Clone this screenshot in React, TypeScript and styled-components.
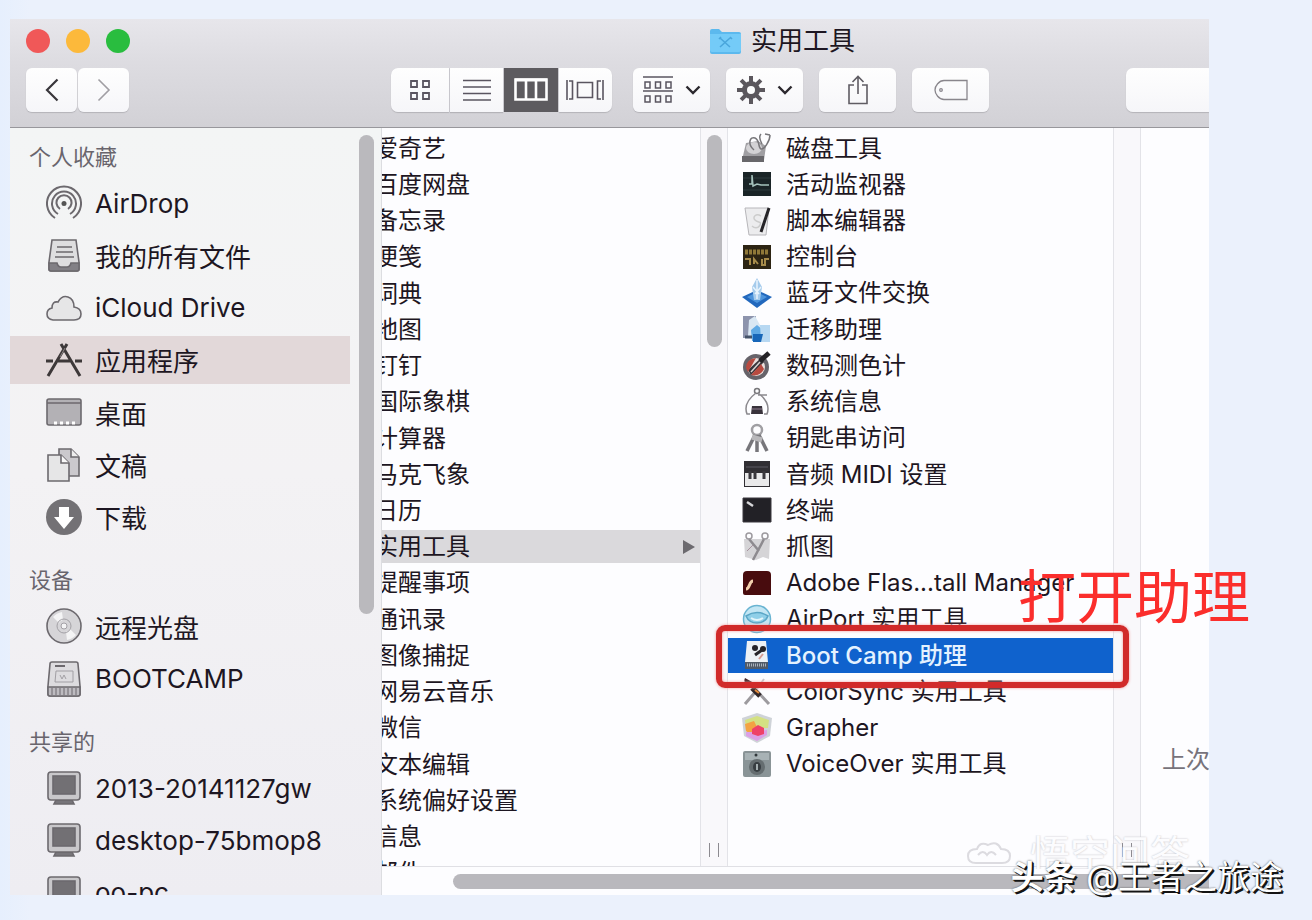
import React from "react";
import styled, { createGlobalStyle, css } from "styled-components";

const GlobalStyle = createGlobalStyle`
  *, *::before, *::after { box-sizing: border-box; }
  body {
    margin: 0;
    background: #eaf1fc;
    color: #1d1622;
    font-family: Inter, "Noto Sans CJK SC", sans-serif;
  }
  ul { list-style: none; margin: 0; padding: 0; }
  button, input {
    font: inherit;
    color: inherit;
    border: 0;
    margin: 0;
    padding: 0;
    background: none;
  }
  svg { display: block; flex: none; }
`;

/* ---------- page and window ---------- */

const Page = styled.main`
  position: relative;
  display: flex;
  height: 100vh;
  min-height: 600px;
  padding: 19px 103px 25px 10px;
  background: linear-gradient(90deg, #e6effd, #ebf1fc 30px);
`;

const Window = styled.section`
  flex: 1;
  min-width: 0;
  display: flex;
  flex-direction: column;
`;

const Toolbar = styled.header`
  padding: 0 0 15px 16px;
  background: linear-gradient(#e7e6eb, #dddce1 40%, #d2d1d6);
  border-bottom: 1px solid #98979c;
  overflow: hidden;
`;

const TitleRow = styled.div`
  display: flex;
  align-items: center;
  height: 44px;
`;

const Lights = styled.div`
  display: flex;
  flex: none;
  gap: 16px;
  width: 684px;
`;

const Light = styled.button<{ $color: string }>`
  width: 24px;
  height: 24px;
  border-radius: 50%;
  background: ${(p) => p.$color};
`;

const Title = styled.h1`
  display: flex;
  align-items: center;
  gap: 10px;
  margin: 0;
  font-size: 26px;
  line-height: 36px;
  font-weight: 400;
  white-space: nowrap;
`;

const Tools = styled.div`
  display: flex;
  margin-top: 5px;
`;

const NavTools = styled.div`
  display: flex;
  flex: none;
  gap: 1px;
  width: 365px;
`;

const toolFace = css`
  display: flex;
  align-items: center;
  justify-content: center;
  height: 44px;
  background: linear-gradient(#fefefe, #f6f6f9);
  box-shadow: 0 1px 1px #b4b3b8;
`;

const NavButton = styled.button`
  ${toolFace}
  width: 51px;
  border-radius: 6px;
`;

const ViewGroup = styled.div`
  display: flex;
  flex: none;
  gap: 1px;
  width: 221px;
  margin-right: 21px;
  border-radius: 7px;
  background: #cfced3;
`;

const ViewButton = styled.button<{ $active?: boolean }>`
  ${toolFace}
  flex: 1;
  &:first-child { flex: none; width: 58px; border-radius: 7px 0 0 7px; }
  &:last-child { border-radius: 0 7px 7px 0; }
  ${(p) => p.$active && css`background: #5d5b5f; box-shadow: none;`}
`;

const ActionGroup = styled.div`
  display: flex;
  flex: none;
  gap: 16px;
`;

const ActionButton = styled.button`
  ${toolFace}
  width: 77px;
  gap: 12px;
  border-radius: 6px;
`;

const Search = styled.input`
  ${toolFace}
  flex: 1;
  min-width: 0;
  margin-left: 137px;
  padding-left: 14px;
  border-radius: 7px 0 0 7px;
`;

const Body = styled.div`
  flex: 1;
  min-height: 0;
  display: flex;
`;

/* ---------- sidebar ---------- */

const Sidebar = styled.aside`
  display: flex;
  flex: none;
  width: 372px;
  background: linear-gradient(#f3f5f5, #f3f2f4 45%, #eeedf2);
  border-right: 1px solid #dcdde1;
  overflow: hidden;
`;

const SidebarNav = styled.nav`
  display: flex;
  flex-direction: column;
  gap: 17px;
  width: 340px;
  padding-top: 9px;
`;

const GroupTitle = styled.h2`
  margin: 0;
  padding-left: 19px;
  font-size: 22px;
  line-height: 40px;
  font-weight: 400;
  color: #69656d;
`;

const SideList = styled.ul<{ $height: number }>`
  display: grid;
  grid-auto-rows: 1fr;
  align-items: center;
  height: ${(p) => p.$height}px;
`;

const SideItem = styled.button<{ $active?: boolean }>`
  display: flex;
  align-items: center;
  gap: 13px;
  width: 100%;
  height: 48px;
  padding-left: 36px;
  font-size: 26px;
  text-align: left;
  white-space: nowrap;
  background: ${(p) => (p.$active ? "#e2d8d9" : "transparent")};
`;

const SideRail = styled.div`
  flex: 1;
  padding: 7px 7px 0 9px;
`;

const Thumb = styled.div<{ $height: number }>`
  width: 15px;
  height: ${(p) => p.$height}px;
  border-radius: 8px;
  background: #bab9bd;
`;

/* ---------- file columns ---------- */

const Browser = styled.div`
  flex: 1;
  min-width: 0;
  display: flex;
  flex-direction: column;
  background: #fdfdff;
`;

const Columns = styled.div`
  flex: 1;
  min-height: 0;
  display: flex;
`;

const AppColumn = styled.div`
  flex: none;
  width: 318px;
  overflow: hidden;
`;

const ToolColumn = styled.div`
  flex: none;
  width: 385px;
`;

const Preview = styled.div`
  flex: 1;
  min-width: 0;
  padding: 614px 0 0 21px;
  overflow: hidden;
  font-size: 24px;
  line-height: 36px;
  color: #77737b;
  white-space: nowrap;
`;

const FileList = styled.ul<{ $height: number }>`
  display: grid;
  grid-auto-rows: 1fr;
  align-items: center;
  height: ${(p) => p.$height}px;
  margin-top: 2px;
`;

const FileCell = styled.li`
  position: relative;
`;

const AppItem = styled.button<{ $active?: boolean }>`
  display: flex;
  align-items: center;
  justify-content: space-between;
  width: 100%;
  height: 33px;
  padding-right: 5px;
  font-size: 24px;
  line-height: 33px;
  text-align: left;
  background: ${(p) => (p.$active ? "#dad9dc" : "transparent")};
`;

/* The list is scrolled sideways, so each name begins left of the column. */
const AppName = styled.span`
  margin-left: -8px;
`;

const ToolItem = styled.button<{ $active?: boolean }>`
  display: flex;
  align-items: center;
  gap: 14px;
  width: 100%;
  height: 35px;
  padding-left: 14px;
  font-size: 24px;
  line-height: 35px;
  text-align: left;
  white-space: nowrap;
  ${(p) => p.$active && css`background: #0f62cd; color: #e4f2ff; font-weight: 500;`}
`;

const Gutter = styled.div`
  display: flex;
  flex: none;
  flex-direction: column;
  align-items: center;
  width: 28px;
  padding: 7px 0 9px;
  background: #f9f8fb;
  border: solid #e3e3e8;
  border-width: 0 1px;
`;

const Grip = styled.div`
  display: flex;
  width: 10px;
  height: 14px;
  margin-top: auto;
  border: solid #8c8a90;
  border-width: 0 1px;
`;

const BottomRail = styled.div`
  flex: none;
  height: 29px;
  padding: 7px 0 7px 71px;
  border-top: 1px solid #e0e0e5;
`;

const BottomThumb = styled.div`
  height: 15px;
  border-radius: 8px 0 0 8px;
  background: #b9b8bd;
`;

/* ---------- marks laid over the window ---------- */

const Frame = styled.div`
  position: absolute;
  z-index: 2;
  inset: -13px -16px -15px -12px;
  border: 6px solid #d12a2a;
  border-radius: 9px;
  box-shadow: 0 0 3px #f29a9a, inset 0 0 3px #f29a9a;
  pointer-events: none;
`;

const Callout = styled.strong`
  position: absolute;
  z-index: 3;
  left: 290px;
  bottom: 46px;
  font-size: 58px;
  line-height: 60px;
  font-weight: 400;
  color: #fb2e2c;
  white-space: nowrap;
  pointer-events: none;
`;

const Credit = styled.p`
  position: absolute;
  z-index: 3;
  right: 29px;
  bottom: 23px;
  margin: 0;
  font-size: 33px;
  line-height: 40px;
  color: #fff;
  text-shadow: 2px 2px 0 #141414, 1px 1px 0 #141414, 0 0 2px #555;
  white-space: nowrap;
  b { font-weight: 700; }
`;

const GhostMark = styled.p`
  position: absolute;
  z-index: 1;
  right: 122px;
  bottom: 51px;
  display: flex;
  align-items: flex-start;
  gap: 18px;
  height: 34px;
  margin: 0;
  overflow: hidden;
  font-size: 40px;
  line-height: 40px;
  color: #fcfcfe;
  text-shadow: 0 0 2px #bdbcc2;
`;

/* ---------- toolbar drawings ---------- */

const Chevron = () => (
  <svg width="16" height="10" viewBox="0 0 16 10" fill="none" stroke="#2b282e" strokeWidth="2.4">
    <path d="M1.5 1.5 8 8l6.500-6.500" />
  </svg>
);

const FolderIcon = () => (
  <svg width="31" height="26" viewBox="0 0 31 26">
    <path d="M0 3q0-2 2-2h7l3 3h17q2 0 2 2v18q0 2-2 2H2q-2 0-2-2z" fill="#5cb9ee" />
    <path d="M0 6h31v16q0 2-2 2H2q-2 0-2-2z" fill="#74cbf8" />
    <path d="m10 10 10 9M20 10l-10 9M9 11l2-2M20 9l2 2" stroke="#4aa6dc" strokeWidth="1.600" fill="none" />
  </svg>
);

const GridIcon = () => (
  <svg width="22" height="22" viewBox="0 0 22 22" fill="none" stroke="#5a5560" strokeWidth="1.800">
    <path d="M2 2h6v6H2zM14 2h6v6h-6zM2 14h6v6H2zM14 14h6v6h-6z" />
  </svg>
);

const LinesIcon = () => (
  <svg width="28" height="22" viewBox="0 0 28 22" stroke="#5a5560" strokeWidth="1.600">
    <path d="M0 1.500h28M0 8h28M0 14.500h28M0 21h28" />
  </svg>
);

const ColumnsIcon = () => (
  <svg width="34" height="24" viewBox="0 0 34 24">
    <path d="M1.500 1.500h31v20h-31z" fill="#5d5b5f" stroke="#fff" strokeWidth="2.600" />
    <path d="M1 2h32" stroke="#fff" strokeWidth="3" />
    <path d="M12 2v20M22 2v20" stroke="#fff" strokeWidth="2.600" />
  </svg>
);

const CoverIcon = () => (
  <svg width="38" height="22" viewBox="0 0 38 22" fill="none" stroke="#5a5560" strokeWidth="1.600">
    <path d="M11.500 3.500h15v15h-15z" />
    <path d="M1 1v20M3 2h3.500v18H3M37 1v20M35 2h-3.500v18H35" />
  </svg>
);

const ArrangeIcon = () => (
  <svg width="30" height="28" viewBox="0 0 30 28" fill="none" stroke="#5a5560" strokeWidth="1.500">
    <path d="M0 1h30M0 15h30" />
    <path d="M2 6h5v6H2zM12.500 6h5v6h-5zM23 6h5v6h-5zM2 20h5v6H2zM12.500 20h5v6h-5zM23 20h5v6h-5z" />
  </svg>
);

const GearIcon = () => (
  <svg width="28" height="28" viewBox="-14 -14 28 28">
    {[0, 45, 90, 135].map((a) => (
      <path key={a} d="M0-14V14" stroke="#5b575d" strokeWidth="4" transform={`rotate(${a})`} />
    ))}
    <circle r="9" fill="#5b575d" />
    <circle r="4" fill="#fbfbfc" />
  </svg>
);

const ShareIcon = () => (
  <svg width="24" height="30" viewBox="0 0 24 30" fill="none" stroke="#5f5c63" strokeWidth="1.600">
    <path d="M8 10H3v18.500h18V10h-5M12 19V1.500M6.500 7 12 1.500 17.500 7" />
  </svg>
);

const TagIcon = () => (
  <svg width="34" height="22" viewBox="0 0 34 22" fill="none" stroke="#89868c" strokeWidth="1.300">
    <path d="M10 1.500h23v19H10C5 20.500 1 15 1 11s4-9.500 9-9.500z" />
    <circle cx="7" cy="11" r="1.300" />
  </svg>
);

/* ---------- sidebar drawings ---------- */

const side = { width: 36, height: 36, viewBox: "0 0 36 36", fill: "none", stroke: "#6c696e", strokeWidth: 1.6 };

const AirDropIcon = () => (
  <svg {...side} strokeWidth="2">
    <path d="M9 33a17 17 0 1 1 18 0M12 29a12 12 0 1 1 12 0M14 24a7.500 7.500 0 1 1 8 0" />
    <circle cx="18" cy="18.500" r="2.500" fill="#555" stroke="none" />
  </svg>
);

const AllFilesIcon = () => (
  <svg {...side}>
    <path d="M6 3h24l3 22v7q0 2-2 2H5q-2 0-2-2v-7z" fill="#dededf" />
    <path d="M3 26h8q1 4 4 4h6q3 0 4-4h8v6q0 2-2 2H5q-2 0-2-2z" fill="#828085" />
    <path d="M11 10h15M10 15h17M9 20h19" />
  </svg>
);

const CloudIcon = () => (
  <svg {...side}>
    <path d="M7 30q-6-1-6-6t5-6q0-7 6-6 4-7 10-5 6 2 6 10 7 1 7 7 0 6-7 6z" fill="#e6e6e7" />
  </svg>
);

const AppsIcon = () => (
  <svg {...side} stroke="#3d3839" strokeWidth="3">
    <path d="M15 2 34 34M21 2 2 34M0 19h7M12 19h12M29 19h7" />
    <path d="m19 6-5 9" stroke="#8a8384" strokeWidth="1" />
  </svg>
);

const DesktopIcon = () => (
  <svg {...side}>
    <rect x="1" y="5" width="34" height="26" rx="2" fill="#b3b1b5" />
    <path d="M1 9h34" />
    <path d="M8 29h3M14 29h3M20 29h3M26 29h3" stroke="#fff" strokeWidth="3" />
  </svg>
);

const DocsIcon = () => (
  <svg {...side}>
    <path d="M13 2h12l8 8v19H13z" fill="#cbc9cd" />
    <path d="M25 2v8h8" fill="#eee" />
    <path d="M2 8h13l8 8v18H2z" fill="#e6e6e7" />
    <path d="M15 8v8h8" fill="#f8f8f8" />
  </svg>
);

const DownloadIcon = () => (
  <svg {...side} stroke="none">
    <circle cx="18" cy="18" r="18" fill="#737175" />
    <path d="M13 8h10v10h5L18 30 8 18h5z" fill="#fff" />
  </svg>
);

const DiscIcon = () => (
  <svg {...side}>
    <circle cx="18" cy="18" r="17" fill="#d6d5d8" />
    <path d="M7 9a15 15 0 0 1 9-5l1 8a7 7 0 0 0-4 3zM30 27a15 15 0 0 1-9 5l-1-8a7 7 0 0 0 4-3z" fill="#f4f4f5" stroke="none" />
    <circle cx="18" cy="18" r="7" stroke="#a3a1a6" strokeWidth="1" />
    <circle cx="18" cy="18" r="3" fill="#f4f4f5" stroke="#a3a1a6" strokeWidth="1" />
  </svg>
);

const DriveIcon = () => (
  <svg {...side}>
    <path d="M6 1h24q2 0 2 2l2 22v8q0 2-2 2H4q-2 0-2-2v-8L4 3q0-2 2-2z" fill="#dddcdf" />
    <path d="M2 26h32v7q0 2-2 2H4q-2 0-2-2z" fill="#bdbbc0" />
    <path d="M6 27v7M10 27v7M14 27v7M18 27v7M22 27v7M26 27v7M30 27v7" strokeWidth="1" />
    <path d="M9 5h10" strokeWidth="2" />
    <path d="M10 10h17v11H9zM14 14l2 4 2-4 2 4" stroke="#a19fa4" strokeWidth="1" />
  </svg>
);

const PcIcon = () => (
  <svg {...side}>
    <path d="M10 30h16l2 4H8z" fill="#77757a" />
    <rect x="2" y="2" width="32" height="28" rx="3" fill="#c8c7ca" />
    <rect x="7" y="6" width="22" height="18" fill="#727074" />
  </svg>
);

/* ---------- utility drawings ---------- */

const app = { width: 30, height: 30, viewBox: "0 0 30 30", fill: "none" };

const DiskUtilityIcon = () => (
  <svg {...app}>
    <path d="m4 10 12-2 8 5-2 14H0z" fill="#a09fa3" />
    <path d="M0 23h22v6H0z" fill="#68676b" />
    <ellipse cx="12" cy="15" rx="8" ry="6" fill="#d3d2d5" />
    <path d="M12 17C5 11 8 3 13 5s3 10 6 11 9-8 9-14M28 2l-5-1M19 1q-3 3 1 10" stroke="#77767a" strokeWidth="1.500" />
  </svg>
);

const ActivityIcon = () => (
  <svg {...app}>
    <path d="M1 3h28v24H1z" fill="#1a2427" />
    <path d="M1 21h28M1 9h28" stroke="#2c3b3e" />
    <path d="M7 15h3V6l1 11 4-2 4 1h8" stroke="#a5c2bd" strokeWidth="1.500" />
  </svg>
);

const ScriptIcon = () => (
  <svg {...app}>
    <path d="M3 2h24l-3 27H7z" fill="#ececee" stroke="#b7b6ba" />
    <path d="M19 10c-5-3-9 1-6 4s7 1 5 5-6 3-8 1" stroke="#ccc" strokeWidth="1.500" />
    <path d="m27 2-8 24" stroke="#252327" strokeWidth="3" />
  </svg>
);

const ConsoleIcon = () => (
  <svg {...app}>
    <path d="M1 3h28v24H1z" fill="#2c2413" />
    <path d="M3 10h24" stroke="#8f7838" strokeWidth="5" strokeDasharray="3 1" />
    <path d="M3 17h5v6M12 22v-5l4 5M20 17v6h3v-6h4" stroke="#a68b4a" strokeWidth="2" />
  </svg>
);

const BluetoothIcon = () => (
  <svg {...app}>
    <path d="m0 19 15-7 15 7-15 11z" fill="#2268bd" />
    <path d="m5 19 10-5 10 5-10 6z" fill="#4d94dc" />
    <path d="M15 0 10 9l2 13h6l2-13z" fill="#a5cbec" />
    <path d="M15 2v19M11 9l6 7M19 9l-6 7" stroke="#e9f4fd" strokeWidth="1.500" />
  </svg>
);

const MigrationIcon = () => (
  <svg {...app}>
    <path d="M1 2h13v22H1z" fill="#8d94ad" />
    <path d="m7 6 6-4 5 9 4 3-6 8H6z" fill="#d9e7f3" />
    <path d="m9 16 6-5 6 5 3 11H10z" fill="#5fa9e4" />
    <path d="M18 11h10v17h-9z" fill="#b7d8f2" />
    <path d="M11 20h10l-2 8h-8z" fill="#1766b8" />
    <path d="M3 23h7" stroke="#455369" strokeWidth="3" />
  </svg>
);

const ColorMeterIcon = () => (
  <svg {...app}>
    <circle cx="14" cy="17" r="13" fill="#66636a" />
    <circle cx="14" cy="17" r="9" fill="#e9dedb" />
    <path d="M6 20 19 8l3 4L9 25z" fill="#38353a" />
    <path d="M4 18q0-9 10-10l-8 14zM9 25l10-11 3 5q-4 8-13 6z" fill="#b84a40" />
    <path d="m9 22 9-10" stroke="#d8d2d0" strokeWidth="1.500" />
    <path d="m18 11 9-8" stroke="#242226" strokeWidth="5" />
  </svg>
);

const SystemInfoIcon = () => (
  <svg {...app}>
    <circle cx="15" cy="4" r="2.500" stroke="#77767a" strokeWidth="1.500" />
    <path d="M14 6C6 12 2 19 5 27l3 0M16 6c8 6 12 13 9 21h-3M16 8h9" stroke="#8b898e" strokeWidth="1.500" />
    <path d="M10 19h10l1 8H9z" fill="#39333c" />
    <path d="M10 22h10" stroke="#8e7d8e" />
  </svg>
);

const KeychainIcon = () => (
  <svg {...app}>
    <circle cx="15" cy="7" r="5" stroke="#a09fa3" strokeWidth="2.500" />
    <path d="m13 12-8 16M15 12v17M17 12l8 16" stroke="#77767b" strokeWidth="3.500" />
    <path d="m10 14 10 3" stroke="#b9b8bb" strokeWidth="5" />
  </svg>
);

const MidiIcon = () => (
  <svg {...app}>
    <path d="M2 2h26v26H2z" fill="#302e33" />
    <path d="M3 14h24v13H3z" fill="#e9e9ea" />
    <path d="M8 12v8M13 12v8M22 12v8" stroke="#39373c" strokeWidth="3" />
    <path d="M4 8h22" stroke="#45434a" strokeWidth="2" />
  </svg>
);

const TerminalIcon = () => (
  <svg {...app}>
    <path d="M1 3h28v24H1z" fill="#222126" stroke="#3b393f" />
    <path d="m5 7 6 4" stroke="#d7d7d9" strokeWidth="2.500" />
  </svg>
);

const GrabIcon = () => (
  <svg {...app}>
    <path d="M2 7h26l-1 20-6-2-7 3-11-3z" fill="#d5d4d7" />
    <path d="m7 7 10 12M22 7 11 28" stroke="#8d8a8f" strokeWidth="2.500" />
    <circle cx="7" cy="4" r="3" stroke="#9d9a9f" strokeWidth="1.500" />
    <circle cx="23" cy="4" r="3" stroke="#9d9a9f" strokeWidth="1.500" />
    <path d="m5 19 6-6" stroke="#a6929e" />
  </svg>
);

const FlashIcon = () => (
  <svg {...app}>
    <path d="M5 3h20q4 0 4 4v20H3q-2 0-2-2V7q0-4 4-4z" fill="#480c0e" />
    <path d="M4 21c4 0 3-8 7-8" stroke="#f2cfac" strokeWidth="3" />
  </svg>
);

const AirPortIcon = () => (
  <svg {...app}>
    <circle cx="15" cy="15" r="13.500" fill="#c3e6f4" stroke="#69b4d2" strokeWidth="1.500" />
    <path d="M4 12q11-7 22 0-3 7-11 7T4 12z" fill="#8fcfe8" stroke="#5aa6c6" strokeWidth="1.500" />
    <path d="M9 14q6 4 12 0" stroke="#e3f5fb" strokeWidth="2" />
    <path d="M9 24q6-4 12 0" stroke="#5aa6c6" strokeWidth="1.500" />
  </svg>
);

const BootCampIcon = () => (
  <svg {...app}>
    <path d="M5 1h19l2 21H3z" fill="#edf1f5" />
    <path d="M3 22h23v7H3z" fill="#515b68" />
    <path d="M5 25h19" stroke="#a9b2bd" strokeWidth="3" strokeDasharray="1 1" />
    <circle cx="13" cy="8" r="3" fill="#252328" />
    <circle cx="21" cy="9" r="3" fill="#252328" />
    <path d="m13 15 7-5" stroke="#252328" strokeWidth="3" />
    <path d="m17 19 4-5" stroke="#d49b92" strokeWidth="2" />
  </svg>
);

const ColorSyncIcon = () => (
  <svg {...app}>
    <path d="M3 2q-3 5 5 9l8 5-4-9z" fill="#402327" />
    <path d="m14 14 13 14M15 14 3 28" stroke="#9d9b9f" strokeWidth="3" />
    <path d="m22 3-7 10" stroke="#c8c7cb" strokeWidth="2" />
    <path d="m10 12 8 8" stroke="#302728" strokeWidth="5" />
    <path d="m13 14 4 3" stroke="#e38b3c" strokeWidth="2" />
  </svg>
);

const GrapherIcon = () => (
  <svg {...app}>
    <path d="M0 5 15 0l15 5-2 18-13 7L2 23z" fill="#cfd3d8" />
    <path d="m3 7 12-4 12 4-1 8H4z" fill="#d4e183" />
    <path d="m3 11 9-3 4 8-8 5-4-3z" fill="#f3a343" />
    <path d="m4 19 8 0 13-2v5l-10 6-11-5z" fill="#dca0e6" />
    <path d="m10 16 6-4 6 3v6l-6 2-6-2z" fill="#ee4268" />
  </svg>
);

const VoiceOverIcon = () => (
  <svg {...app}>
    <rect x="1" y="2" width="28" height="26" rx="2" fill="#8a9497" />
    <path d="M3 4h24v7H3z" fill="#a8b2b5" />
    <circle cx="15" cy="18" r="8" fill="#656d70" />
    <ellipse cx="15" cy="18" rx="4" ry="5" fill="#383e42" />
    <path d="M15 15v6" stroke="#a5afb1" strokeWidth="2" />
    <circle cx="14" cy="6" r="1.500" fill="#31383b" />
  </svg>
);

/* ---------- content ---------- */

type Entry = { name: string; Icon: React.FC; active?: boolean };

const groups: { title: string; height: number; items: Entry[] }[] = [
  {
    title: "个人收藏",
    height: 366,
    items: [
      { name: "AirDrop", Icon: AirDropIcon },
      { name: "我的所有文件", Icon: AllFilesIcon },
      { name: "iCloud Drive", Icon: CloudIcon },
      { name: "应用程序", Icon: AppsIcon, active: true },
      { name: "桌面", Icon: DesktopIcon },
      { name: "文稿", Icon: DocsIcon },
      { name: "下载", Icon: DownloadIcon },
    ],
  },
  {
    title: "设备",
    height: 105,
    items: [
      { name: "远程光盘", Icon: DiscIcon },
      { name: "BOOTCAMP", Icon: DriveIcon },
    ],
  },
  {
    title: "共享的",
    height: 157,
    items: [
      { name: "2013-20141127gw", Icon: PcIcon },
      { name: "desktop-75bmop8", Icon: PcIcon },
      { name: "oo-pc", Icon: PcIcon },
    ],
  },
];

const apps = [
  "爱奇艺", "百度网盘", "备忘录", "便笺", "词典", "地图", "钉钉", "国际象棋", "计算器", "马克飞象", "日历",
  "实用工具", "提醒事项", "通讯录", "图像捕捉", "网易云音乐", "微信", "文本编辑", "系统偏好设置", "信息", "邮件",
];

const utilities: Entry[] = [
  { name: "磁盘工具", Icon: DiskUtilityIcon },
  { name: "活动监视器", Icon: ActivityIcon },
  { name: "脚本编辑器", Icon: ScriptIcon },
  { name: "控制台", Icon: ConsoleIcon },
  { name: "蓝牙文件交换", Icon: BluetoothIcon },
  { name: "迁移助理", Icon: MigrationIcon },
  { name: "数码测色计", Icon: ColorMeterIcon },
  { name: "系统信息", Icon: SystemInfoIcon },
  { name: "钥匙串访问", Icon: KeychainIcon },
  { name: "音频 MIDI 设置", Icon: MidiIcon },
  { name: "终端", Icon: TerminalIcon },
  { name: "抓图", Icon: GrabIcon },
  { name: "Adobe Flas...tall Manager", Icon: FlashIcon },
  { name: "AirPort 实用工具", Icon: AirPortIcon },
  { name: "Boot Camp 助理", Icon: BootCampIcon, active: true },
  { name: "ColorSync 实用工具", Icon: ColorSyncIcon },
  { name: "Grapher", Icon: GrapherIcon },
  { name: "VoiceOver 实用工具", Icon: VoiceOverIcon },
];

export default function App() {
  return (
    <Page>
      <GlobalStyle />
      <Window>
        <Toolbar>
          <TitleRow>
            <Lights>
              <Light $color="#f05858" aria-label="关闭" />
              <Light $color="#fcb93b" aria-label="最小化" />
              <Light $color="#29bd3f" aria-label="缩放" />
            </Lights>
            <Title><FolderIcon />实用工具</Title>
          </TitleRow>
          <Tools>
            <NavTools>
              <NavButton aria-label="后退">
                <svg width="14" height="24" viewBox="0 0 14 24" fill="none" stroke="#39363b" strokeWidth="2.200"><path d="M12.500 1.500 2 12l10.500 10.500" /></svg>
              </NavButton>
              <NavButton aria-label="前进">
                <svg width="14" height="24" viewBox="0 0 14 24" fill="none" stroke="#a09ea3" strokeWidth="1.600"><path d="M1.500 1.500 12 12 1.500 22.500" /></svg>
              </NavButton>
            </NavTools>
            <ViewGroup>
              <ViewButton aria-label="图标"><GridIcon /></ViewButton>
              <ViewButton aria-label="列表"><LinesIcon /></ViewButton>
              <ViewButton $active aria-label="分栏"><ColumnsIcon /></ViewButton>
              <ViewButton aria-label="封面"><CoverIcon /></ViewButton>
            </ViewGroup>
            <ActionGroup>
              <ActionButton aria-label="排列"><ArrangeIcon /><Chevron /></ActionButton>
              <ActionButton aria-label="操作"><GearIcon /><Chevron /></ActionButton>
              <ActionButton aria-label="共享"><ShareIcon /></ActionButton>
              <ActionButton aria-label="标记"><TagIcon /></ActionButton>
            </ActionGroup>
            <Search type="search" aria-label="搜索" />
          </Tools>
        </Toolbar>
        <Body>
          <Sidebar>
            <SidebarNav>
              {groups.map((g) => (
                <section key={g.title}>
                  <GroupTitle>{g.title}</GroupTitle>
                  <SideList $height={g.height}>
                    {g.items.map(({ name, Icon, active }) => (
                      <li key={name}>
                        <SideItem $active={active}><Icon />{name}</SideItem>
                      </li>
                    ))}
                  </SideList>
                </section>
              ))}
            </SidebarNav>
            <SideRail><Thumb $height={479} /></SideRail>
          </Sidebar>
          <Browser>
            <Columns>
              <AppColumn>
                <FileList $height={761}>
                  {apps.map((name) => (
                    <FileCell key={name}>
                      <AppItem $active={name === "实用工具"}>
                        <AppName>{name}</AppName>
                        {name === "实用工具" && (
                          <svg width="12" height="14" viewBox="0 0 12 14"><path d="M0 0v14l12-7z" fill="#6c6a6f" /></svg>
                        )}
                      </AppItem>
                    </FileCell>
                  ))}
                </FileList>
              </AppColumn>
              <Gutter><Thumb $height={212} /><Grip /></Gutter>
              <ToolColumn>
                <FileList $height={652}>
                  {utilities.map(({ name, Icon, active }) => (
                    <FileCell key={name}>
                      <ToolItem $active={active}><Icon />{name}</ToolItem>
                      {active && <><Frame /><Callout>打开助理</Callout></>}
                    </FileCell>
                  ))}
                </FileList>
              </ToolColumn>
              <Gutter><Grip /></Gutter>
              <Preview>上次</Preview>
            </Columns>
            <BottomRail><BottomThumb /></BottomRail>
          </Browser>
        </Body>
      </Window>
      <GhostMark>
        <svg width="46" height="34" viewBox="0 0 46 34" fill="none" stroke="#dcdbe0" strokeWidth="2">
          <path d="M10 28q-8 0-8-7t9-7q3-8 11-4 9-5 13 4 9 0 9 7t-8 7zM12 20q5-6 9 0 4-6 9 0" />
        </svg>
        悟空问答
      </GhostMark>
      <Credit><b>头条</b> @王者之旅途</Credit>
    </Page>
  );
}
